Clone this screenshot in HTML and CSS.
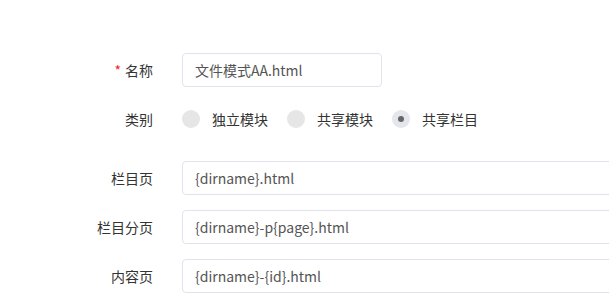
FILE: index.html
```html
<!DOCTYPE html>
<html>
  <head>
    <meta charset="utf-8" />
    <link rel="stylesheet" href="styles.css">
    <title>模板设置</title>
  </head>
  <body>
    <form class="form">
      <div class="row">
        <label class="label"><span class="required">*</span>名称</label>
        <input class="input short" type="text" value="文件模式AA.html" />
      </div>
      <div class="row radio-row">
        <label class="label">类别</label>
        <div class="radios">
          <label class="radio"><span class="dot"></span>独立模块</label>
          <label class="radio"><span class="dot"></span>共享模块</label>
          <label class="radio checked"><span class="dot"></span>共享栏目</label>
        </div>
      </div>
      <div class="row">
        <label class="label">栏目页</label>
        <input class="input" type="text" value="{dirname}.html" />
      </div>
      <div class="row">
        <label class="label">栏目分页</label>
        <input class="input" type="text" value="{dirname}-p{page}.html" />
      </div>
      <div class="row">
        <label class="label">内容页</label>
        <input class="input" type="text" value="{dirname}-{id}.html" />
      </div>
    </form>
  </body>
</html>
```

FILE: styles.css
```css
body {
  margin: 0;
  background: #fff;
  font-family: "Noto Sans CJK SC", "Open Sans", sans-serif;
  font-size: 14px;
  color: #333;
  overflow: hidden;
}

.form {
  padding-top: 53px;
}

.row {
  display: flex;
  align-items: center;
  height: 34px;
  margin-bottom: 15px;
}

.radio-row {
  margin-bottom: 25px;
}

.label {
  width: 153px;
  text-align: right;
  margin-right: 29px;
  flex-shrink: 0;
}

.required {
  color: #f5222d;
  margin-right: 4px;
}

.input {
  box-sizing: border-box;
  height: 34px;
  width: 460px;
  flex-shrink: 0;
  border: 1px solid #e2e2ec;
  border-radius: 4px;
  padding: 0 12px;
  font-family: "Noto Sans CJK SC", "Open Sans", sans-serif;
  font-size: 14px;
  color: #555;
  outline: none;
}

.input.short {
  width: 200px;
}

.radios {
  display: flex;
  align-items: center;
}

.radio {
  display: flex;
  align-items: center;
  margin-right: 19px;
}

.dot {
  width: 18px;
  height: 18px;
  border-radius: 50%;
  background: #e6e6e6;
  margin-right: 12px;
  display: flex;
  align-items: center;
  justify-content: center;
}

.checked .dot {
  background: #e4e6ee;
}

.checked .dot::after {
  content: "";
  width: 6px;
  height: 6px;
  border-radius: 50%;
  background: #666;
}
```
